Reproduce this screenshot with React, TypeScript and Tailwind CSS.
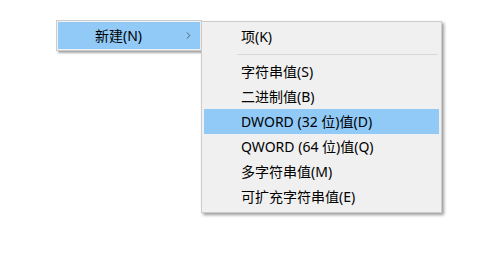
import { ChevronRight } from "lucide-react";

type Item = { label: string; active?: boolean };

const items: Item[] = [
  { label: "字符串值(S)" },
  { label: "二进制值(B)" },
  { label: "DWORD (32 位)值(D)", active: true },
  { label: "QWORD (64 位)值(Q)" },
  { label: "多字符串值(M)" },
  { label: "可扩充字符串值(E)" },
];

function MenuRow({ label, active }: Item) {
  return (
    <div
      className={`h-[25px] flex items-center pl-[37px] mx-[2px] ${
        active ? "bg-[#91c9f7]" : ""
      }`}
    >
      {label}
    </div>
  );
}

export default function App() {
  return (
    <div className="w-[491px] h-[273px] bg-white overflow-hidden font-['Noto_Sans','Noto_Sans_CJK_SC',sans-serif] text-[14px] text-[#000] leading-none">
      <div className="flex flex-row items-start pt-[20px] pl-[56px]">
        {/* parent menu */}
        <div className="w-[146px] h-[31px] bg-[#f0f0f0] border border-[#cccccc] p-px shadow-[2px_2px_2px_rgba(0,0,0,0.35)]">
          <div className="h-[27px] bg-[#91c9f7] flex items-center pl-[37px] pr-[6px]">
            <span className="flex-1">新建(N)</span>
            <ChevronRight className="w-[11px] h-[11px] text-[#333]" strokeWidth={1.5} />
          </div>
        </div>

        {/* submenu */}
        <div className="-ml-px mt-px w-[241px] bg-[#f0f0f0] border border-[#cccccc] pt-[2px] pb-[3px] shadow-[2px_2px_3px_rgba(0,0,0,0.4)]">
          <MenuRow label="项(K)" />
          <div className="h-[10px] flex items-center pl-[35px] pr-[3px]">
            <div className="h-px w-full bg-[#d7d7d7]" />
          </div>
          {items.map((it) => (
            <MenuRow key={it.label} {...it} />
          ))}
        </div>
      </div>
    </div>
  );
}
